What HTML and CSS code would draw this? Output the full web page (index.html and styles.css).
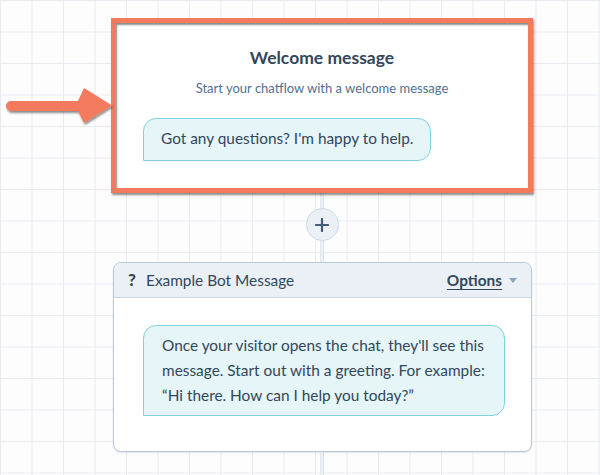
FILE: index.html
```html
<!DOCTYPE html>
<html lang="en">
<head>
    <meta charset="UTF-8">
    <meta name="viewport" content="width=device-width, initial-scale=1.0">
    <title>Chatflow</title>
    <link rel="stylesheet" href="styles.css">
</head>
<body>

    <div class="flow">
        <div class="welcome">
            <svg class="arrow" width="110" height="44" viewBox="0 0 110 44">
                <defs>
                    <filter id="shade" x="-10%" y="-20%" width="120%" height="160%">
                        <feDropShadow dx="1" dy="2" stdDeviation="1.2" flood-color="#000" flood-opacity="0.45"/>
                    </filter>
                </defs>
                <path filter="url(#shade)" d="M5 15 L72 15 L78 2 L106 19.5 L78 37 L72 25 L5 25 A5 5 0 0 1 5 15 Z" fill="#f37a5d"/>
            </svg>
            <h2 class="title">Welcome message</h2>
            <p class="subtitle">Start your chatflow with a welcome message</p>
            <div class="bubble short">Got any questions? I'm happy to help.</div>
        </div>

        <div class="connector">
            <button class="add" title="Add">
                <svg width="14" height="14" viewBox="0 0 14 14">
                    <path d="M7 1 V13 M1 7 H13" stroke="#425b76" stroke-width="2.2" stroke-linecap="round"/>
                </svg>
            </button>
        </div>

        <div class="card">
            <div class="card-header">
                <span class="q">?</span>
                <span class="card-title">Example Bot Message</span>
                <a class="options" href="#">Options</a>
                <svg class="caret" width="8" height="5" viewBox="0 0 8 5">
                    <path d="M0 0 H8 L4 5 Z" fill="#8ba2bb"/>
                </svg>
            </div>
            <div class="card-body">
                <div class="bubble long">Once your visitor opens the chat, they'll see this message. Start out with a greeting. For example: “Hi there. How can I help you today?”</div>
            </div>
        </div>

        <div class="tail"></div>
    </div>

</body>
</html>
```

FILE: styles.css
```css
body {
    margin: 0;
    height: 475px;
    overflow: hidden;
    font-family: Lato, "Open Sans", sans-serif;
    color: #33475b;
    background-color: #fdfdfe;
    background-image:
        linear-gradient(to right, #e7ebf0 1px, transparent 1px),
        linear-gradient(to bottom, #e7ebf0 1px, transparent 1px);
    background-size: 31.5px 31.5px;
}
.flow {
    width: 422px;
    margin: 18px 0 0 111px;
    display: flex;
    flex-direction: column;
}
.welcome {
    position: relative;
    height: 175px;
    box-sizing: border-box;
    border: 5px solid #f37a5d;
    background: #fff;
    padding: 24px 0 0 27px;
    box-shadow: 1px 2px 2px rgba(0, 0, 0, 0.45), inset 1px 2px 2px rgba(0, 0, 0, 0.45);
}
.arrow {
    position: absolute;
    left: -110px;
    top: 63px;
}
.title {
    margin: 0 0 0 -27px;
    font-size: 17.5px;
    line-height: 22px;
    font-weight: 700;
    text-align: center;
}
.subtitle {
    margin: 10px 0 21px -27px;
    font-size: 13px;
    line-height: 18px;
    color: #516f90;
    text-align: center;
}
.bubble {
    background: #e5f5f8;
    border: 1px solid #7fd1de;
    border-radius: 13px 13px 13px 0;
    font-size: 15.4px;
    color: #33475b;
}
.short {
    display: inline-block;
    line-height: 20px;
    padding: 9px 17px 12px 17px;
}
.connector {
    height: 69px;
    display: flex;
    justify-content: center;
    align-items: flex-start;
    padding-top: 15px;
    box-sizing: border-box;
    background: linear-gradient(to right, transparent 209px, #d9dfe7 209px, #eef1f5 210px, #eef1f5 212px, #d9dfe7 212px, #d9dfe7 213px, transparent 213px);
}
.add {
    width: 33px;
    height: 33px;
    border-radius: 50%;
    border: 1px solid #cfd9e4;
    background: #eaf0f6;
    padding: 0;
    display: flex;
    align-items: center;
    justify-content: center;
    cursor: pointer;
}
.card {
    margin-left: 2px;
    width: 419px;
    height: 190px;
    box-sizing: border-box;
    border: 1px solid #b9c7d6;
    border-radius: 8px;
    background: #fff;
    overflow: hidden;
    box-shadow: 0 1px 2px rgba(45, 62, 80, 0.12);
}
.card-header {
    display: flex;
    align-items: center;
    gap: 8px;
    height: 35px;
    box-sizing: border-box;
    padding: 0 14px 0 14px;
    background: #eaf0f6;
    border-bottom: 1px solid #cbd6e2;
    font-size: 15.4px;
    line-height: 20px;
}
.q {
    font-weight: 900;
    font-size: 17px;
    width: 10px;
}
.card-title {
    flex: 1;
}
.options {
    color: #33475b;
    font-weight: 700;
    text-decoration: underline;
    text-underline-offset: 3px;
}
.caret {
    margin-left: -1px;
}
.card-body {
    padding: 27px 0 0 29px;
}
.long {
    width: 362px;
    box-sizing: border-box;
    line-height: 25px;
    padding: 7px 18px 7px 18px;
}
.tail {
    height: 30px;
    background: linear-gradient(to right, transparent 209px, #d9dfe7 209px, #eef1f5 210px, #eef1f5 212px, #d9dfe7 212px, #d9dfe7 213px, transparent 213px);
}
```
